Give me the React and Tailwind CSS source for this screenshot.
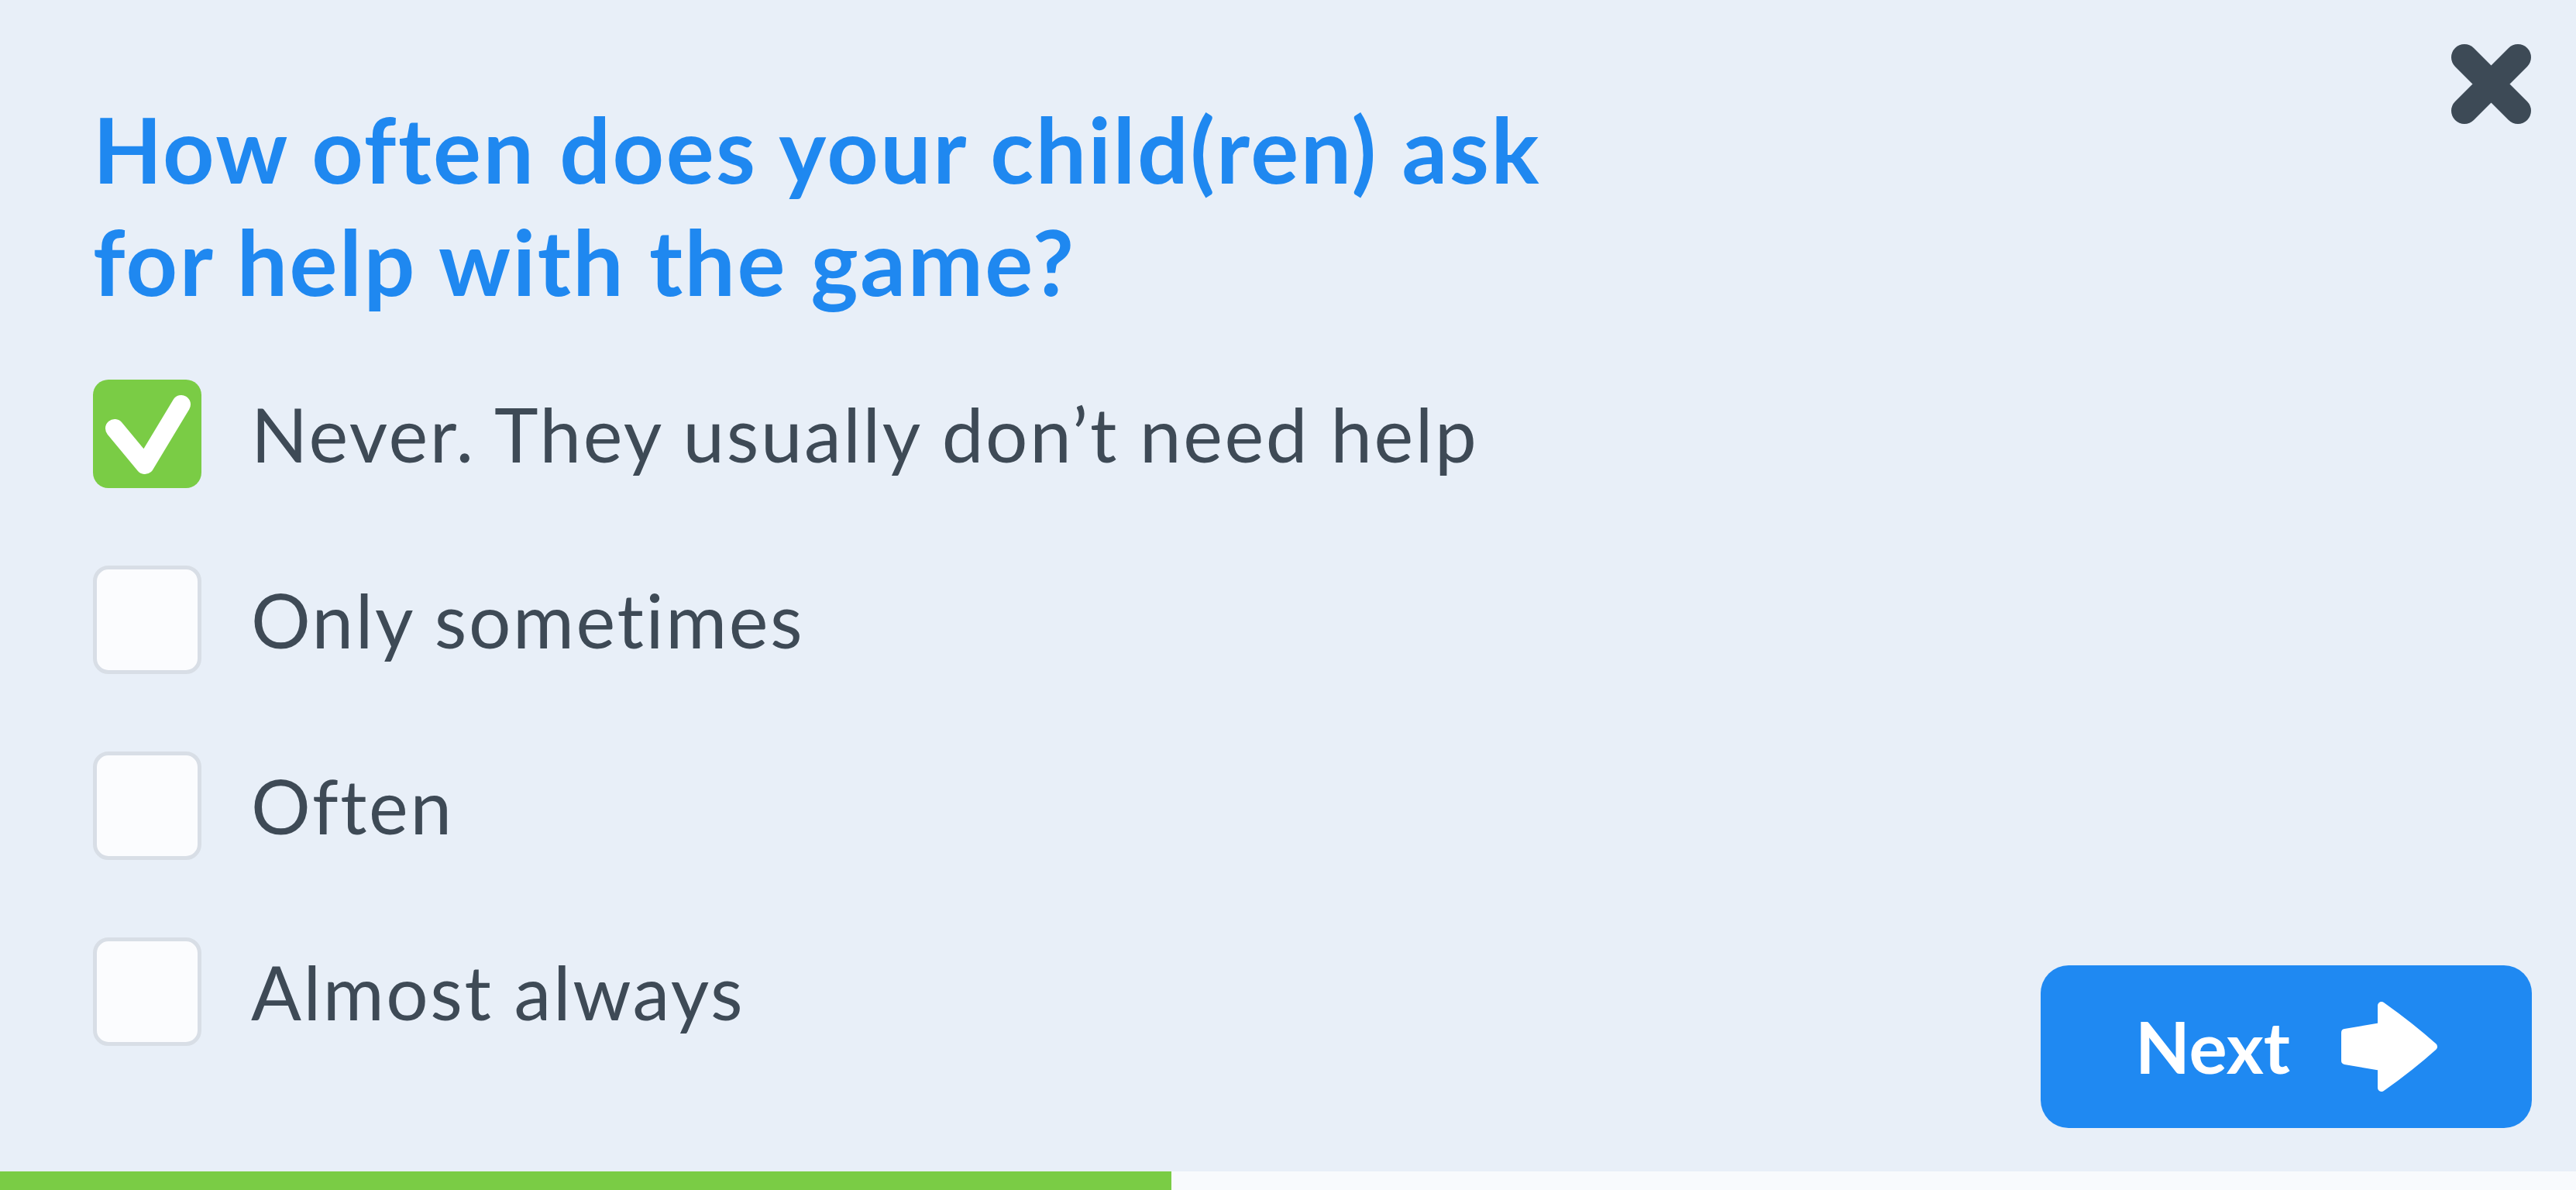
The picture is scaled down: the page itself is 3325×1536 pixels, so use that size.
import React from "react";

const options = [
  { label: "Never. They usually don\u2019t need help", checked: true },
  { label: "Only sometimes", checked: false },
  { label: "Often", checked: false },
  { label: "Almost always", checked: false },
];

function Box({ checked }) {
  if (checked) {
    return (
      <div className="w-[140px] h-[140px] shrink-0 rounded-[20px] bg-[#7acc45] flex items-center justify-center">
        <svg width="140" height="140" viewBox="0 0 140 140">
          <path d="M28 63 L67 110 L114 32" fill="none" stroke="#ffffff" strokeWidth="24" strokeLinecap="round" strokeLinejoin="round" />
        </svg>
      </div>
    );
  }
  return (
    <div className="w-[140px] h-[140px] shrink-0 rounded-[20px] bg-[#fbfcfe] border-[5px] border-[#d8dee6]" />
  );
}

export default function App() {
  return (
    <div className="w-[3325px] h-[1536px] bg-[#e8eff8] flex flex-col overflow-hidden" style={{ fontFamily: "Lato, 'Open Sans', sans-serif" }}>
      <div className="relative flex-1 flex flex-row justify-between items-end pl-[120px] pr-[57px] pb-[56px]">
        <button className="absolute top-[56px] right-[57px] w-[105px] h-[105px]" aria-label="close">
          <svg width="105" height="105" viewBox="0 0 105 105">
            <path d="M18 18 L87 87 M87 18 L18 87" stroke="#3d4a56" strokeWidth="34" strokeLinecap="round" />
          </svg>
        </button>
        <div className="flex flex-col self-start pt-[120px]">
          <h1 className="text-[116px] leading-[145px] font-bold tracking-[2.5px] text-[#1f88f0] w-[1960px]">
            How often does your child(ren) ask for help with the game?
          </h1>
          <div className="flex flex-col gap-[100px] mt-[80px]">
            {options.map((o) => (
              <div key={o.label} className="flex flex-row items-center gap-[64px]">
                <Box checked={o.checked} />
                <span className="text-[96px] leading-none tracking-[2.6px] text-[#3e4a56]">{o.label}</span>
              </div>
            ))}
          </div>
        </div>
        <button className="w-[634px] h-[210px] rounded-[36px] bg-[#1f89f2] flex flex-row items-center justify-center gap-[66px]">
          <span className="text-[92px] font-bold text-white leading-none">Next</span>
          <svg width="124" height="116" viewBox="0 0 124 116">
            <path d="M5 40 L52 32 L52 5 Q90 32 119 58 Q90 84 52 111 L52 84 L5 76 Z" fill="#ffffff" stroke="#ffffff" strokeWidth="10" strokeLinejoin="round" />
          </svg>
        </button>
      </div>
      <div className="h-[24px] flex flex-row bg-[#f8fafd]">
        <div className="w-[1512px] h-full bg-[#7acc45]" />
      </div>
    </div>
  );
}
